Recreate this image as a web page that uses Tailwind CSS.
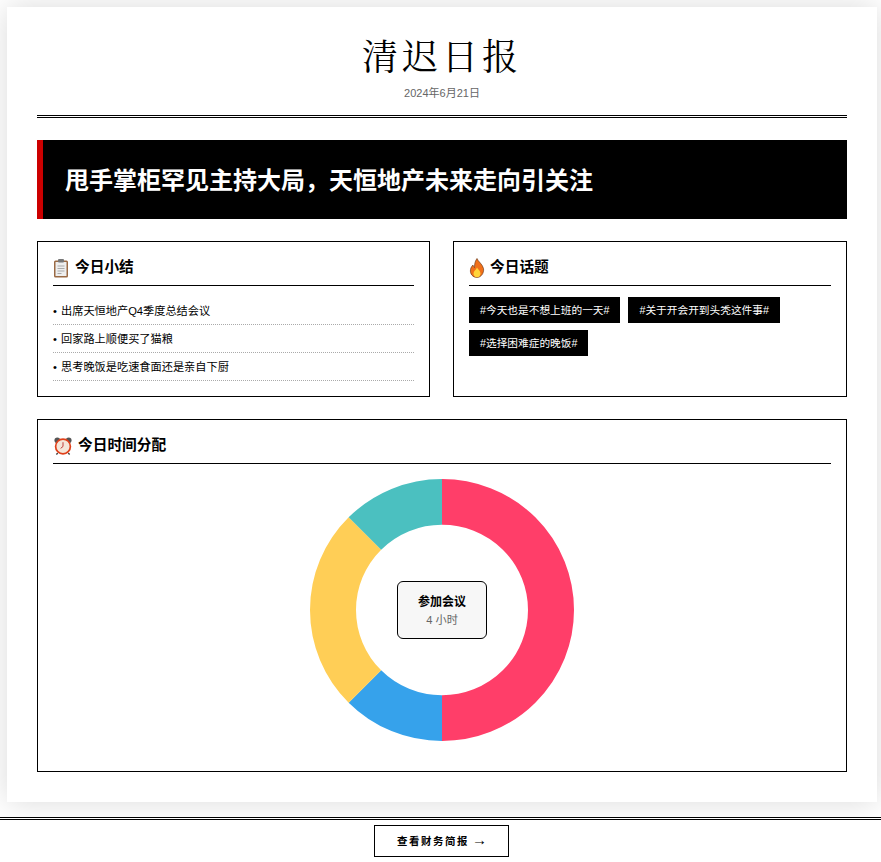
<!DOCTYPE html>
<html lang="zh-CN">
<head>
<meta charset="utf-8">
<script src="https://cdn.jsdelivr.net/npm/@tailwindcss/browser@4"></script>
</head>
<body class="bg-white text-black font-['Liberation_Sans','Noto_Sans_CJK_SC',sans-serif]">
<div class="h-[817px] overflow-hidden">
<main class="mt-[7px] ml-[7px] w-[870px] h-[795px] bg-white shadow-[0_0_30px_rgba(0,0,0,0.15)] px-[30px] pt-[28px]">
  <header class="h-[83px] border-b-[3px] border-double border-black text-center">
    <h1 class="text-[36px] leading-[40px] tracking-[4px] font-['Noto_Serif_CJK_SC','Liberation_Serif','Noto_Sans_CJK_SC',serif] font-normal">清迟日报</h1>
    <p class="mt-[8px] text-[11px] leading-[20px] text-[#666]">2024年6月21日</p>
  </header>
  <section class="mt-[22px] h-[79px] bg-black border-l-[6px] border-[#c00] pl-[22px] pt-[3px] flex items-center">
    <h2 class="text-[24px] font-bold text-white">甩手掌柜罕见主持大局，天恒地产未来走向引关注</h2>
  </section>
  <div class="mt-[22px] grid grid-cols-[393px_394px] gap-[23px]">
    <section class="h-[156px] border border-black px-[15px] pt-[14px]">
      <h3 class="h-[30px] border-b border-black flex items-start gap-[6px] text-[14.7px] leading-[22px] font-bold">
        <svg class="w-[16px] h-[20px] mt-[2px]" viewBox="0 0 16 20"><rect x="1" y="2.500" width="14" height="17" rx="1.500" fill="#9a6a45"/><rect x="2.500" y="4" width="11" height="14" fill="#eeeeee"/><rect x="5" y="1" width="6" height="3.500" rx="1" fill="#777"/><path d="M4.500 8h7M4.500 10.500h7M4.500 13h7M4.500 15.500h4" stroke="#aaa" stroke-width="1"/></svg>
        今日小结
      </h3>
      <ul class="mt-[11px] text-[11.2px]">
        <li class="h-[28px] leading-[29px] border-b border-dotted border-[#aaa]"><span class="inline-block w-[8px]">•</span>出席天恒地产Q4季度总结会议</li>
        <li class="h-[28px] leading-[29px] border-b border-dotted border-[#aaa]"><span class="inline-block w-[8px]">•</span>回家路上顺便买了猫粮</li>
        <li class="h-[28px] leading-[29px] border-b border-dotted border-[#aaa]"><span class="inline-block w-[8px]">•</span>思考晚饭是吃速食面还是亲自下厨</li>
      </ul>
    </section>
    <section class="h-[156px] border border-black px-[15px] pt-[14px]">
      <h3 class="h-[30px] border-b border-black flex items-start gap-[5px] text-[14.7px] leading-[22px] font-bold">
        <svg class="w-[16px] h-[20px] mt-[2px]" viewBox="0 0 16 20"><path d="M8 .5c1 3 5.500 5.500 6.500 10 .8 4.500-2.500 9-6.500 9s-7.300-3.500-6.500-8c.3-2 1.500-3.500 2.500-4.500.3 1.500 1 2 1.500 2.500C5.500 6 6 3 8 .5z" fill="#f0701a" stroke="#5c2a0a" stroke-width=".6"/><path d="M8 9.500c1 2 3.500 3.500 3.500 6 0 2.200-1.500 3.800-3.500 3.800S4.500 17.700 4.500 15.500c0-2.500 2.500-3.500 3.500-6z" fill="#ffd43b"/></svg>
        今日话题
      </h3>
      <div class="mt-[11px] flex flex-wrap gap-x-[8px] gap-y-[7px] text-[10.7px] text-white">
        <span class="h-[26px] leading-[27px] bg-black px-[11px]">#今天也是不想上班的一天#</span>
        <span class="h-[26px] leading-[27px] bg-black px-[11px]">#关于开会开到头秃这件事#</span>
        <span class="h-[26px] leading-[27px] bg-black px-[11px]">#选择困难症的晚饭#</span>
      </div>
    </section>
  </div>
  <section class="mt-[22px] h-[353px] border border-black px-[15px] pt-[14px]">
    <h3 class="h-[30px] border-b border-black flex items-start gap-[6px] text-[14.7px] leading-[22px] font-bold">
      <svg class="ml-[1px] w-[18px] h-[18px] mt-[3px]" viewBox="0 0 19 19"><circle cx="3.500" cy="3.500" r="3" fill="#555"/><circle cx="15.500" cy="3.500" r="3" fill="#555"/><path d="M4 17l-1.500 1.500M15 17l1.500 1.500" stroke="#444" stroke-width="1.500"/><circle cx="9.500" cy="10" r="7.800" fill="#f5e6d8" stroke="#e0401a" stroke-width="1.800"/><path d="M9.500 5.500V10L7 12" fill="none" stroke="#b33" stroke-width="1"/></svg>
      今日时间分配
    </h3>
    <div class="relative mt-[15px] flex justify-center">
      <svg class="w-[264px] h-[262px]" viewBox="0 0 264 264" preserveAspectRatio="none">
        <g fill="none" stroke-width="46" transform="rotate(-90 132 132)">
          <circle cx="132" cy="132" r="109" stroke="#ff3e69" pathLength="100" stroke-dasharray="50 50"/>
          <circle cx="132" cy="132" r="109" stroke="#36a2eb" pathLength="100" stroke-dasharray="12.5 87.5" stroke-dashoffset="-50"/>
          <circle cx="132" cy="132" r="109" stroke="#ffce56" pathLength="100" stroke-dasharray="25 75" stroke-dashoffset="-62.5"/>
          <circle cx="132" cy="132" r="109" stroke="#4bc0c0" pathLength="100" stroke-dasharray="12.5 87.5" stroke-dashoffset="-87.5"/>
        </g>
      </svg>
      <div class="absolute left-[344px] top-[102px] w-[90px] h-[58px] rounded-[6px] border border-black bg-[#f7f7f7] text-center">
        <p class="mt-[11px] text-[12px] leading-[18px] font-bold">参加会议</p>
        <p class="text-[11.2px] leading-[18px] text-[#666]">4 小时</p>
      </div>
    </div>
  </section>
</main>
</div>
<footer class="border-t-[3px] border-double border-black h-[45px] pt-[5px] flex justify-center pl-[2px]">
  <a class="w-[135px] h-[32px] pt-[2px] pl-[1px] border border-black flex items-center justify-center gap-[3px] text-[10.4px] font-bold tracking-[1.6px]">查看财务简报 <span class="text-[15px] leading-[15px] font-normal tracking-normal -mt-[6px]">→</span></a>
</footer>
</body>
</html>
